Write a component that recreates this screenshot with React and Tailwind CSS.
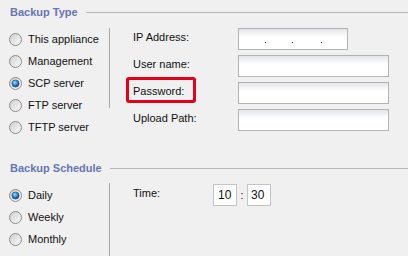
import React from "react";

const Radio = ({ checked }) => (
  <svg width="13" height="13" viewBox="0 0 13 13" className="shrink-0">
    <defs>
      <linearGradient id="rg" x1="0" y1="0" x2="1" y2="1">
        <stop offset="0" stopColor="#cfcfcf" />
        <stop offset="1" stopColor="#fbfbfb" />
      </linearGradient>
      <radialGradient id="rb" cx="0.4" cy="0.35" r="0.7">
        <stop offset="0" stopColor="#a8dcf7" />
        <stop offset="0.5" stopColor="#2f8bd1" />
        <stop offset="1" stopColor="#0e3c70" />
      </radialGradient>
    </defs>
    <circle cx="6.5" cy="6.5" r="6" fill="url(#rg)" stroke="#8b8b8b" />
    {checked && (
      <circle cx="6.5" cy="6.5" r="3.6" fill="url(#rb)" stroke="#1b4676" strokeWidth="0.6" />
    )}
  </svg>
);

const Heading = ({ title, className = "" }) => (
  <div className={`flex items-center h-[24px] pl-[10px] ${className}`}>
    <span className="font-bold text-[11px] text-[#6576b9]">{title}</span>
    <div className="flex-1 ml-[8px] h-px bg-[#b8b8b8]" />
  </div>
);

const RadioList = ({ items, selected }) => (
  <div className="w-[109px] pt-[4px] flex flex-col">
    {items.map((r) => (
      <div key={r} className="h-[22px] flex items-center pl-[9px] gap-[6px]">
        <Radio checked={r === selected} />
        <span>{r}</span>
      </div>
    ))}
  </div>
);

const TextInput = ({ w, children }) => (
  <div
    className={`${w} h-[22px] border border-[#b3b3b3] bg-linear-to-b from-[#e3e5ea] via-white via-40% to-white relative`}
  >
    {children}
  </div>
);

export default function App() {
  return (
    <div className="w-[408px] h-[256px] bg-[#f0f0f0] overflow-hidden font-['Liberation_Sans',Arial,sans-serif] text-[11px] text-[#111]">
      <Heading title="Backup Type" />
      <div className="flex">
        <RadioList
          items={["This appliance", "Management", "SCP server", "FTP server", "TFTP server"]}
          selected="SCP server"
        />
        <div className="w-px h-[80px] mt-[4px] bg-[#a9a9a9]" />
        <div className="pt-[4px] pl-[23px] flex flex-col gap-[5px]">
          <div className="h-[22px] flex items-center">
            <span className="w-[105px] pb-[3px]">IP Address:</span>
            <TextInput w="w-[110px]">
              <div className="absolute top-[13px] left-[26px] w-px h-px bg-[#222]" />
              <div className="absolute top-[13px] left-[53px] w-px h-px bg-[#222]" />
              <div className="absolute top-[13px] left-[82px] w-px h-px bg-[#222]" />
            </TextInput>
          </div>
          <div className="h-[22px] flex items-center">
            <span className="w-[105px] pb-[3px]">User name:</span>
            <TextInput w="w-[151px]" />
          </div>
          <div className="h-[22px] flex items-center relative">
            <span className="w-[105px] pb-[3px]">Password:</span>
            <span className="absolute left-[-7px] top-[-5px] w-[70px] h-[26px] border-[3px] border-[#e2001a] rounded-[3px]" />
            <TextInput w="w-[151px]" />
          </div>
          <div className="h-[22px] flex items-center">
            <span className="w-[105px] pb-[3px]">Upload Path:</span>
            <TextInput w="w-[151px]" />
          </div>
        </div>
      </div>
      <Heading title="Backup Schedule" className="mt-[18px]" />
      <div className="flex">
        <RadioList items={["Daily", "Weekly", "Monthly"]} selected="Daily" />
        <div className="w-px h-[80px] mt-[3px] bg-[#a9a9a9]" />
        <div className="pt-[4px] pl-[23px]">
          <div className="h-[22px] flex items-center">
            <span className="w-[80px] pb-[3px]">Time:</span>
            <div className="w-[24px] h-[22px] border border-[#c4c4c4] bg-white flex items-center pl-[4px] text-[12px]">10</div>
            <span className="w-[10px] text-center">:</span>
            <div className="w-[24px] h-[22px] border border-[#c4c4c4] bg-white flex items-center pl-[3px] text-[12px]">30</div>
          </div>
        </div>
      </div>
    </div>
  );
}
